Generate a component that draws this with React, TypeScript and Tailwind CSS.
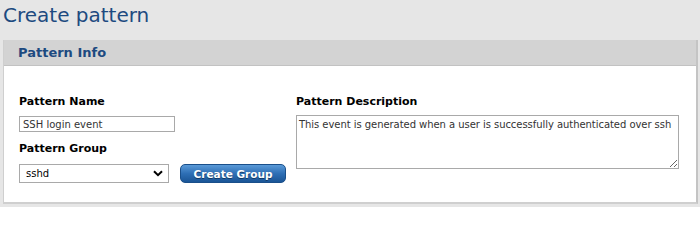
export default function App() {
  return (
    <div className="min-h-[207px] w-[700px] bg-[#e6e6e6] pl-[3px] pr-[2px] font-['DejaVu_Sans',Verdana,sans-serif]">
      <h1 className="h-[40px] pt-[2px] text-[20px] leading-[26px] text-[#1d4a80]">Create pattern</h1>

      <div className="border-l border-l-[#cfcfcf] border-r-2 border-r-[#c4c4c4] border-b-2 border-b-[#cfcfcf] bg-white">
        <div className="h-[26px] border-b border-[#c2c2c2] bg-[#d3d3d3] pl-[14px] text-[13px] font-bold leading-[26px] text-[#1d4a80]">
          Pattern Info
        </div>

        <div className="flex gap-[10px] pb-[19px] pl-[15px] pt-[28px]">
          {/* left column */}
          <div className="w-[267px]">
            <label className="block text-[11px] font-bold leading-[16px] text-black">Pattern Name</label>
            <input
              defaultValue="SSH login event"
              className="mt-[6px] block h-[16px] w-[156px] border border-[#a9a9a9] px-[3px] text-[10px] leading-[14px] text-[#333] outline-none"
            />
            <label className="mt-[9px] block text-[11px] font-bold leading-[16px] text-black">Pattern Group</label>
            <div className="mt-[7px] flex items-center gap-[11px]">
              <div className="relative h-[19px] w-[150px] border border-[#a9a9a9] bg-white">
                <span className="absolute left-[6px] top-[2px] text-[10px] leading-[14px] text-black">sshd</span>
                <svg className="absolute right-[5px] top-[5px]" width="10" height="7" viewBox="0 0 10 7">
                  <path d="M1 1.2 L5 5.2 L9 1.2" fill="none" stroke="#000" strokeWidth="2" />
                </svg>
              </div>
              <button className="h-[19px] w-[106px] rounded-[5px] border border-[#1a4f8a] bg-gradient-to-b from-[#5a9ad8] via-[#2e6fb5] to-[#1a5596] text-[10.5px] font-bold leading-[16px] text-white [text-shadow:0_1px_0_#123a66]">
                Create Group
              </button>
            </div>
          </div>

          {/* right column */}
          <div className="flex-1">
            <label className="block text-[11px] font-bold leading-[16px] text-black">Pattern Description</label>
            <textarea
              defaultValue="This event is generated when a user is successfully authenticated over ssh"
              className="mt-[5px] block h-[54px] w-[383px] resize border border-[#a9a9a9] px-[2px] py-[2px] text-[10px] leading-[14px] tracking-[-0.05px] text-[#333] outline-none"
            />
          </div>
        </div>
      </div>
    </div>
  );
}
